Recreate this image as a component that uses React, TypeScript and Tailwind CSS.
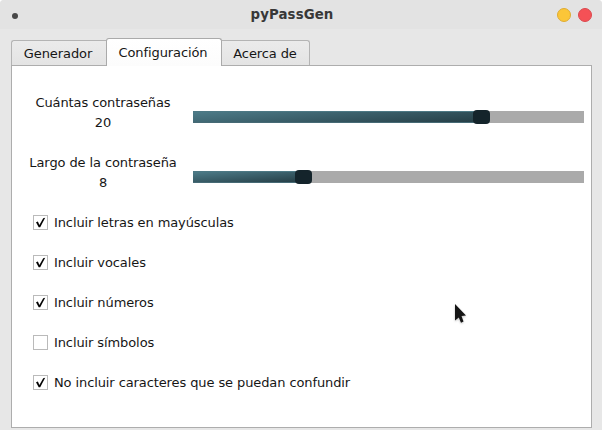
import React from "react";

function Slider({ label, value, percent }: { label: string; value: number; percent: number }) {
  return (
    <div className="flex h-[60px] items-start">
      <div className="w-[181px] pl-px text-center leading-5">
        <div>{label}</div>
        <div>{value}</div>
      </div>
      <div className="mt-[17px] flex h-3.5 w-[391px] items-center">
        <div
          className="h-3 border-y border-[#4c7884] border-b-[#466a75] bg-linear-[175deg,#4d7b88_0%,#3b606b_45%,#263f47_100%]"
          style={{ width: `${percent}%` }}
        />
        <div className="relative -mr-1 -ml-px h-3.5 w-[17px] shrink-0 rounded-[4px] bg-[#14242b]" />
        <div className="h-3 grow bg-[#aaaaaa]" />
      </div>
    </div>
  );
}

function Option({ label, checked }: { label: string; checked: boolean }) {
  return (
    <div className="flex h-10 items-center">
      <span className="mr-1.5 flex size-[15px] items-center justify-center border border-[#bababa] bg-white">
        {checked && (
          <svg width="13" height="13" viewBox="0 0 13 13" fill="none">
            <path d="M2 6.2 L3.9 5.6 L5.4 8.9 L9.2 2.3 L11.2 1.8 L6.2 11.3 L4.7 11.3 Z" fill="#050505" />
          </svg>
        )}
      </span>
      <span className="pt-0.5">{label}</span>
    </div>
  );
}

export default function App() {
  return (
    <div className="bg-white">
      <div className="h-[430px] w-[602px] overflow-hidden rounded-t-[4px] bg-[#e7e7e7] font-['DejaVu_Sans',sans-serif] text-[13px] tracking-[-0.1px] text-[#161616]">
        <header className="flex h-[29px] items-center bg-[#e3e3e3]">
          <div className="w-[72px] pt-0.5 pl-3">
            <div className="size-1.5 rounded-full bg-[#484848]" />
          </div>
          <h1 className="grow pr-[45px] text-center text-[13.33px] font-bold tracking-[0.1px] text-[#383838]">pyPassGen</h1>
          <div className="flex w-[45px] gap-[7px] pt-px pr-2.5">
            <span className="size-3.5 shrink-0 rounded-full border border-[#dfac32] bg-[#fbc638]" />
            <span className="size-3.5 shrink-0 rounded-full border border-[#db494e] bg-[#f55156]" />
          </div>
        </header>
        <nav className="flex h-9 items-end px-[11px]">
          <div className="flex h-[25px] w-[95px] items-center justify-center rounded-tl-[3px] border-t border-l border-[#b4b4b4] bg-linear-to-b from-[#ebebeb] to-[#e4e4e4] pt-px pr-0.5">
            Generador
          </div>
          <div className="relative -mb-px flex h-7 w-[116px] items-center justify-center rounded-t-[3px] border border-b-0 border-[#aaaaaa] bg-linear-to-b from-white to-[#fcfcfc] pr-0.5">
            Configuración
          </div>
          <div className="flex h-[25px] w-[88px] items-center justify-center rounded-tr-[3px] border-t border-r border-[#b4b4b4] bg-linear-to-b from-[#ebebeb] to-[#e4e4e4] pt-px pr-px">
            Acerca de
          </div>
        </nav>
        <main className="mx-[11px] mr-2.5 h-[363px] border border-[#adadad] bg-white pt-[27px]">
          <div>
            <Slider label="Cuántas contraseñas" value={20} percent={71.87} />
            <Slider label="Largo de la contraseña" value={8} percent={26.35} />
          </div>
          <div className="-mt-[11px] pl-[21px]">
            <Option label="Incluir letras en mayúsculas" checked />
            <Option label="Incluir vocales" checked />
            <Option label="Incluir números" checked />
            <Option label="Incluir símbolos" checked={false} />
            <Option label="No incluir caracteres que se puedan confundir" checked />
          </div>
        </main>
      </div>
      <svg className="absolute top-[300px] left-[450px] drop-shadow-[0_1px_1px_rgba(0,0,0,0.25)]" width="20" height="28" viewBox="0 0 20 28">
        <path d="M5 4 L16 15.5 L11.5 16 L13.5 21.5 L11 22.7 L8.8 17.5 L5 20.5 Z" fill="#151515" />
      </svg>
    </div>
  );
}
